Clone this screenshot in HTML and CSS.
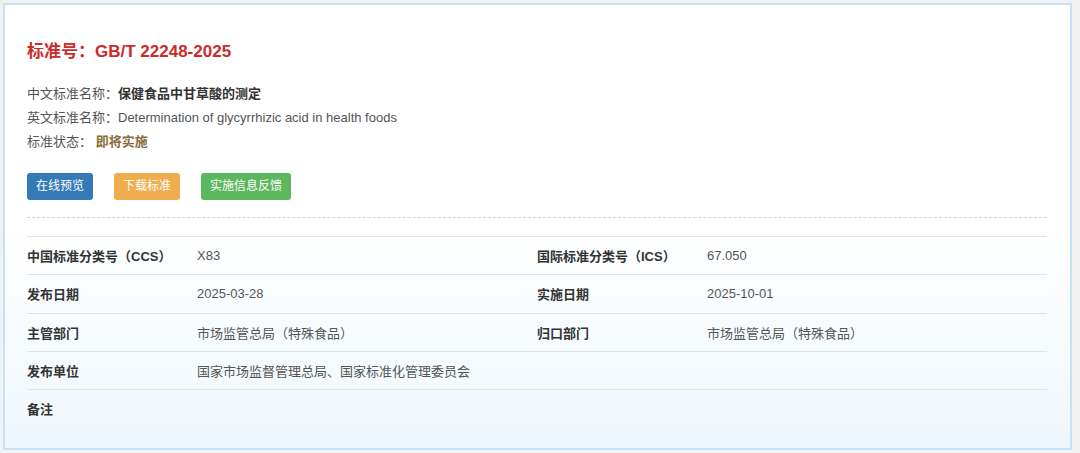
FILE: index.html
```html
<!DOCTYPE html>
<html lang="zh-CN">
<head>
    <meta charset="UTF-8">
    <meta name="viewport" content="width=device-width, initial-scale=1.0">
    <link rel="stylesheet" href="styles.css">
    <title>GB/T 22248-2025</title>
</head>
<body>
    <div class="detail-box">
        <h3 class="std-title">标准号：GB/T 22248-2025</h3>

        <div class="std-info">
            <p>中文标准名称：<b>保健食品中甘草酸的测定</b></p>
            <p>英文标准名称：Determination of glycyrrhizic acid in health foods</p>
            <p>标准状态：&nbsp;<span class="status">即将实施</span></p>
        </div>

        <div class="actions">
            <a href="#" class="btn btn-blue">在线预览</a>
            <a href="#" class="btn btn-orange">下载标准</a>
            <a href="#" class="btn btn-green">实施信息反馈</a>
        </div>

        <div class="divider"></div>

        <table class="std-table">
            <tr>
                <th>中国标准分类号（CCS）</th>
                <td>X83</td>
                <th>国际标准分类号（ICS）</th>
                <td>67.050</td>
            </tr>
            <tr>
                <th>发布日期</th>
                <td>2025-03-28</td>
                <th>实施日期</th>
                <td>2025-10-01</td>
            </tr>
            <tr>
                <th>主管部门</th>
                <td>市场监管总局（特殊食品）</td>
                <th>归口部门</th>
                <td>市场监管总局（特殊食品）</td>
            </tr>
            <tr>
                <th>发布单位</th>
                <td colspan="3">国家市场监督管理总局、国家标准化管理委员会</td>
            </tr>
            <tr>
                <th>备注</th>
                <td colspan="3"></td>
            </tr>
        </table>
    </div>
</body>
</html>
```

FILE: styles.css
```css
body {
    margin: 0;
    padding: 3px 8px 3px 3px;
    background-color: #f2f2f2;
    font-family: "Liberation Sans", Arial, "Noto Sans CJK SC", sans-serif;
    font-size: 13px;
    color: #555;
}

.detail-box {
    height: 447px;
    box-sizing: border-box;
    border: 2px solid #c4e3f8;
    background: linear-gradient(to bottom, #ffffff 0%, #ffffff 50%, #eef7fd 100%);
    padding: 34px 23px 0 22px;
}

.std-title {
    margin: 0;
    font-size: 17px;
    line-height: 26px;
    font-weight: bold;
    color: #cc2b2b;
}

.std-info {
    margin-top: 17px;
}

.std-info p {
    margin: 0;
    line-height: 24px;
}

.std-info b {
    color: #333;
}

.status {
    color: #8a6d3b;
    font-weight: bold;
}

.actions {
    display: flex;
    gap: 21px;
    margin-top: 19px;
}

.btn {
    display: inline-block;
    height: 27px;
    line-height: 27px;
    padding: 0 9px;
    border-radius: 3px;
    font-size: 12px;
    color: #fff;
    text-decoration: none;
}

.btn-blue {
    background-color: #337ab7;
}

.btn-orange {
    background-color: #f0ad4e;
}

.btn-green {
    background-color: #5cb85c;
}

.divider {
    margin-top: 17px;
    border-top: 1px dashed #d5d5d5;
}

.std-table {
    width: 100%;
    margin-top: 18px;
    border-collapse: collapse;
    table-layout: fixed;
}

.std-table th,
.std-table td {
    height: 37.25px;
    padding: 0;
    border-top: 1px solid #e3e3e3;
    text-align: left;
    vertical-align: middle;
}

.std-table th {
    width: 170px;
    font-weight: bold;
    color: #333;
}

.std-table td {
    width: 340px;
}
```
